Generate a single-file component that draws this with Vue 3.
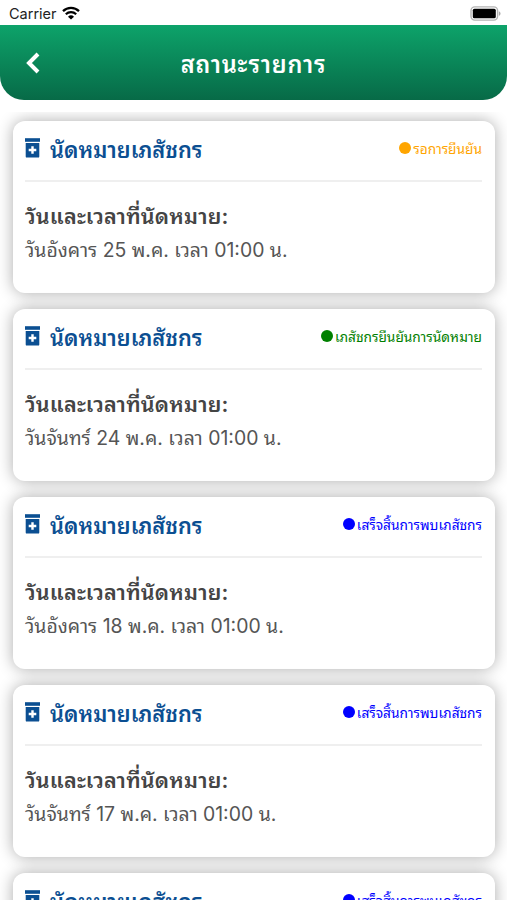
<template>
  <div class="screen">
    <div class="status-bar">
      <span class="carrier">Carrier</span>
      <svg class="wifi" width="18" height="14" viewBox="0 0 18 14">
        <path d="M1 5.1a11.6 11.6 0 0 1 16 0" fill="none" stroke="#000" stroke-width="2.3" />
        <path d="M3.8 8.2a7.6 7.6 0 0 1 10.4 0" fill="none" stroke="#000" stroke-width="2.2" />
        <path d="M9 13.6 6 10.7a4.3 4.3 0 0 1 6 0z" fill="#000" />
      </svg>
      <svg class="battery" width="31" height="15" viewBox="0 0 31 15">
        <rect x="1" y="0.9" width="26.6" height="13.2" rx="3.8" fill="#fff" stroke="#b4b4b4" stroke-width="1.4" />
        <rect x="2.8" y="2.7" width="23" height="9.6" rx="1.6" fill="#000" />
        <path d="M28.9 5.2v4.6c1-.4 1.600-1.300 1.600-2.300s-.6-1.900-1.600-2.300z" fill="#a9a9a9" />
      </svg>
    </div>

    <header class="header">
      <svg class="back" width="14" height="22" viewBox="0 0 14 22">
        <path d="M12 2 3 11l9 9" fill="none" stroke="#fff" stroke-width="4" />
      </svg>
      <h1 class="title">สถานะรายการ</h1>
    </header>

    <main class="list">
      <article v-for="item in items" :key="item.id" class="card">
        <div class="card-head">
          <svg class="bottle" width="15" height="20" viewBox="0 0 15 20">
            <path d="M0 .2h15v3.600H0z" />
            <path fill-rule="evenodd" d="M.7 5h13.600v13.400a1.200 1.200 0 0 1-1.200 1.200H1.900a1.200 1.200 0 0 1-1.200-1.200zM6.300 8.200v2.600H3.700v2.400h2.600v2.600h2.400v-2.600h2.600v-2.400H8.700V8.200z" />
          </svg>
          <h2 class="card-title">นัดหมายเภสัชกร</h2>
          <div class="status" :class="item.type">
            <span class="dot"></span>
            <span class="status-text">{{ item.status }}</span>
          </div>
        </div>
        <p class="label">วันและเวลาที่นัดหมาย:</p>
        <p class="date">{{ item.date }}</p>
      </article>
    </main>
  </div>
</template>

<script setup>
import { ref } from 'vue'

const items = ref([
  { id: 1, type: 'waiting', status: 'รอการยืนยัน', date: 'วันอังคาร 25 พ.ค. เวลา 01:00 น.' },
  { id: 2, type: 'confirmed', status: 'เภสัชกรยืนยันการนัดหมาย', date: 'วันจันทร์ 24 พ.ค. เวลา 01:00 น.' },
  { id: 3, type: 'done', status: 'เสร็จสิ้นการพบเภสัชกร', date: 'วันอังคาร 18 พ.ค. เวลา 01:00 น.' },
  { id: 4, type: 'done', status: 'เสร็จสิ้นการพบเภสัชกร', date: 'วันจันทร์ 17 พ.ค. เวลา 01:00 น.' },
  { id: 5, type: 'done', status: 'เสร็จสิ้นการพบเภสัชกร', date: 'วันอังคาร 11 พ.ค. เวลา 01:00 น.' }
])
</script>

<style>
body {
  margin: 0;
  overflow: hidden;
}
</style>

<style scoped>
.screen {
  display: flex;
  flex-direction: column;
  width: 100%;
  height: 100vh;
  overflow: hidden;
  background: #fff;
  font-family: Inter, 'Noto Sans Thai Looped', 'Noto Looped Thai', Loma, Waree, Garuda, 'Noto Sans Thai', sans-serif;
}

.status-bar {
  display: flex;
  align-items: center;
  flex: none;
  height: 25px;
  box-sizing: border-box;
  padding: 2px 6px 0 9px;
}
.carrier {
  font-size: 14.5px;
  line-height: 20px;
  color: #222;
}
.wifi {
  margin: -2px 0 0 5px;
}
.battery {
  margin: -1px 0 0 auto;
}

/* Header */
.header {
  display: grid;
  grid-template-columns: 60px 1fr 60px;
  align-items: center;
  flex: none;
  height: 75px;
  border-radius: 0 0 24px 24px;
  background: linear-gradient(#0da36a, #076a47);
}
.back {
  margin-left: 26px;
}
.title {
  margin: 4px 0 0;
  font-size: 23.5px;
  font-weight: 600;
  line-height: 32px;
  letter-spacing: 0.8px;
  text-align: center;
  white-space: nowrap;
  color: #fff;
}

/* Appointment list */
.list {
  display: flex;
  flex-direction: column;
  flex: 1;
  gap: 16px;
  min-height: 0;
  margin-top: 12px;
  padding: 9px 12px 0 13px;
  overflow: hidden;
}
.card {
  flex: none;
  height: 172px;
  box-sizing: border-box;
  padding: 0 13px 0 12px;
  border-radius: 12px;
  background: #fff;
  box-shadow: 0 0 16px rgba(0, 0, 0, 0.33);
}
.card-head {
  display: flex;
  align-items: center;
  height: 61px;
  box-sizing: border-box;
  border-bottom: 2px solid #efefef;
}
.bottle {
  flex: none;
  margin-top: -5px;
  fill: #0b4f92;
}
.card-title {
  margin: -2px 0 0 10px;
  font-size: 21.8px;
  font-weight: 600;
  line-height: 30px;
  white-space: nowrap;
  color: #0b4f92;
}
.status {
  display: flex;
  align-items: center;
  gap: 2px;
  margin: -4px 0 0 auto;
  font-size: 13.7px;
  line-height: 20px;
  white-space: nowrap;
}
.dot {
  width: 12px;
  height: 12px;
  margin-top: -1px;
  border-radius: 50%;
  background: currentColor;
}
.waiting {
  color: #ffa500;
}
.confirmed {
  color: #008000;
}
.done {
  color: #0000ff;
}
.label {
  margin: 17px 0 0;
  font-size: 21.5px;
  font-weight: 600;
  line-height: 34px;
  letter-spacing: 0.2px;
  white-space: nowrap;
  color: #444;
}
.date {
  margin: 1px 0 0;
  font-size: 19.4px;
  line-height: 33px;
  white-space: nowrap;
  color: #555;
}
</style>
